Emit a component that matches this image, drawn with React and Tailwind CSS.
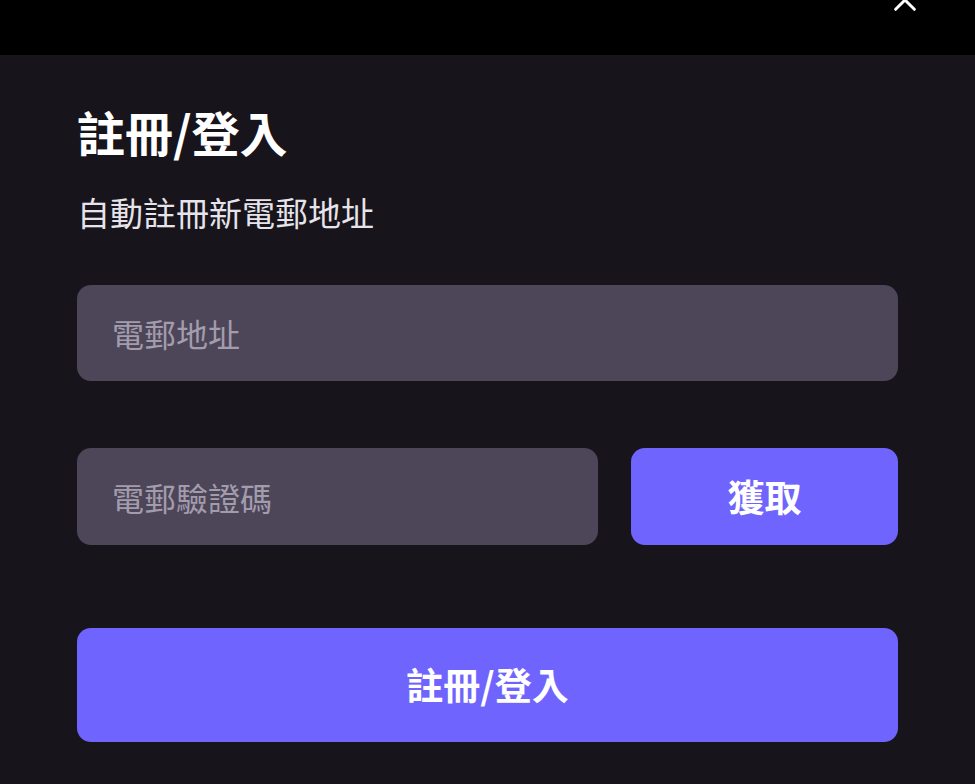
import { useState } from 'react';

const font = { fontFamily: '"Noto Sans CJK TC", "Noto Sans", sans-serif' };

const App = () => {
  const [email, setEmail] = useState('')
  const [code, setCode] = useState('')

  return (
    <div style={font} className="w-full h-[784px] flex flex-col bg-black overflow-hidden">
      {/* top bar with the close button cut off at the edge */}
      <div className="relative h-[55px] bg-black shrink-0">
        <button className="absolute right-[54px] -top-[16px] text-white">
          <svg width="32" height="32" viewBox="0 0 24 24" fill="none" stroke="currentColor" strokeWidth="2.2" strokeLinecap="round">
            <path d="M5 5l14 14M19 5L5 19" />
          </svg>
        </button>
      </div>

      <div className="flex-1 bg-[#17141c] px-[77px] pt-[48px]">
        <div className="text-white text-[48px] font-bold leading-[1.2]">註冊/登入</div>
        <div className="mt-[32px] text-[#e6e4ea] text-[33px] leading-[1.2]">自動註冊新電郵地址</div>

        <input
          className="mt-[53px] block w-full h-[96px] rounded-[14px] bg-[#4d4659] px-[35px] text-[32px] text-white placeholder-[#a29cad] outline-none"
          placeholder="電郵地址"
          value={email}
          onChange={e => setEmail(e.target.value)}
        />

        <div className="mt-[67px] flex gap-[33px]">
          <input
            className="block w-[521px] h-[97px] rounded-[14px] bg-[#4d4659] px-[35px] text-[32px] text-white placeholder-[#a29cad] outline-none"
            placeholder="電郵驗證碼"
            value={code}
            onChange={e => setCode(e.target.value)}
          />
          <button className="flex-1 h-[97px] rounded-[14px] bg-[#7064ff] text-white text-[37px] font-bold">
            獲取
          </button>
        </div>

        <button className="mt-[83px] w-full h-[114px] rounded-[14px] bg-[#7064ff] text-white text-[37px] font-bold">
          註冊/登入
        </button>
      </div>
    </div>
  )
}

export default App
